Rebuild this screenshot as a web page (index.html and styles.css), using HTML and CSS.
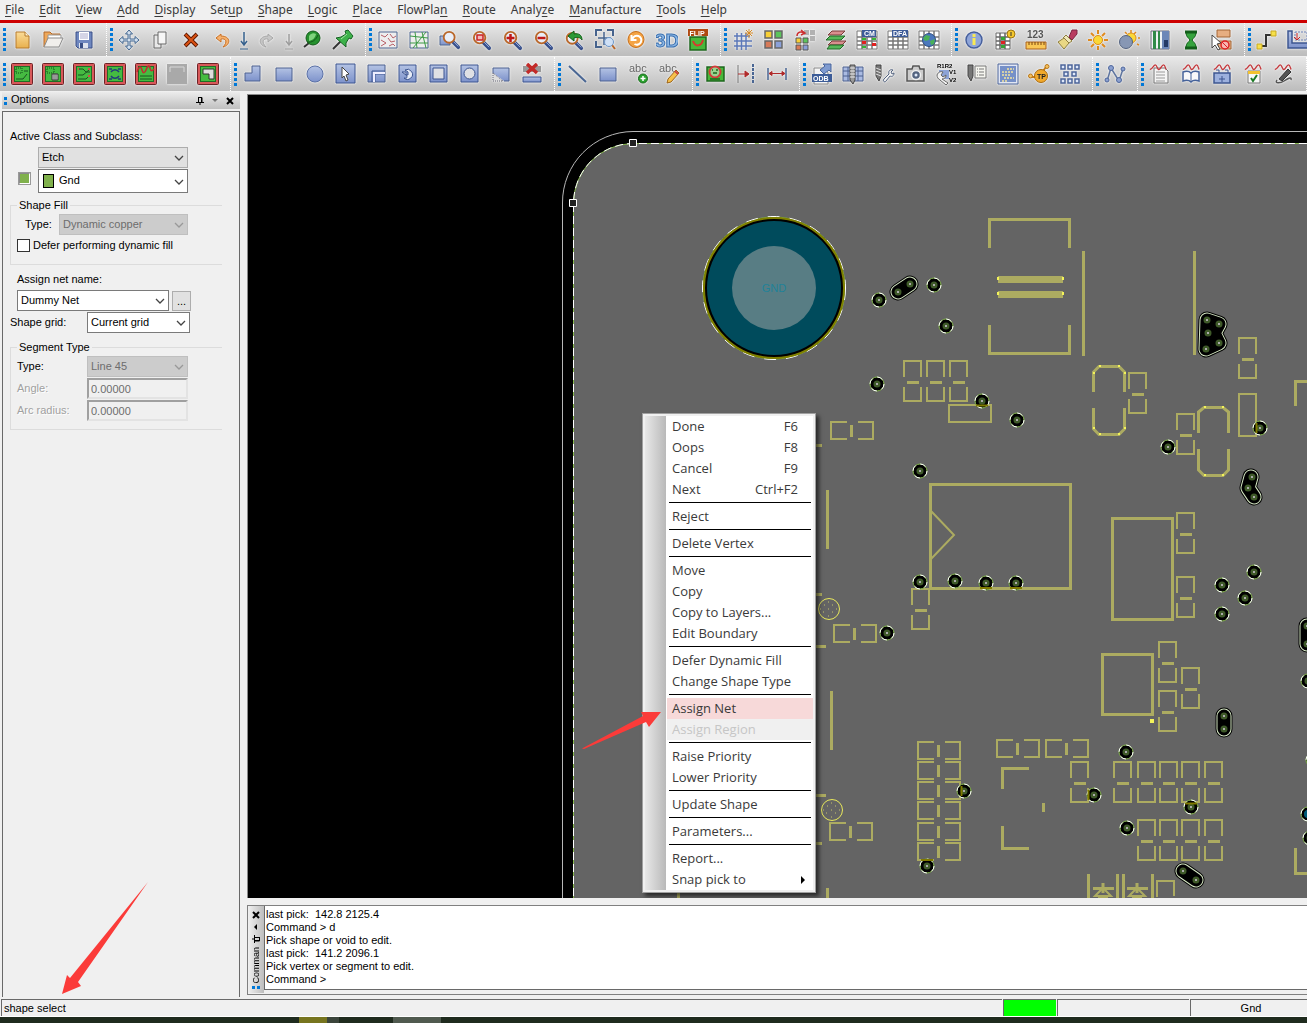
FILE: index.html
```html
<!DOCTYPE html>
<html lang="en">
<head>
<meta charset="utf-8">
<title>PCB Editor</title>
<link rel="stylesheet" href="styles.css">
</head>
<body>
<svg class="defs" aria-hidden="true">
  <defs>
    <linearGradient id="gBlue" x1="0" y1="0" x2="0" y2="1"><stop offset="0" stop-color="#b4c3e4"/><stop offset="1" stop-color="#7d92cb"/></linearGradient>
    <linearGradient id="gOrange" x1="0" y1="0" x2="0" y2="1"><stop offset="0" stop-color="#fbdc98"/><stop offset="1" stop-color="#e8b04e"/></linearGradient>
    <symbol id="pcb" viewBox="0 0 22 22"><rect x="0.500" y="0.500" width="21" height="21" rx="1" fill="#d8595a" stroke="#6d2226"/><rect x="3.500" y="3.500" width="15" height="15" fill="#45bb41" stroke="#1f6d24"/></symbol>
    <symbol id="lens" viewBox="0 0 22 22"><path d="M13 13l6 6" stroke="#38508c" stroke-width="4" stroke-linecap="round"/><path d="M13.500 12.500l5.500 5.500" stroke="#9db2de" stroke-width="1"/><circle cx="9" cy="8" r="6" fill="#e9eef8" stroke="#b9672a" stroke-width="2"/></symbol>
    <symbol id="sheet" viewBox="0 0 22 22"><path d="M1 2h20v18H1z" fill="#fff" stroke="#777"/><path d="M1 8h20M1 12h20M1 16h20M6 2v18M11 2v18M16 2v18" stroke="#777" stroke-width="1.500" fill="none"/></symbol>
    <symbol id="squiggle" viewBox="0 0 22 22"><path d="M2 6c3 0 4-5 6-5s2 5 4 5 3-5 5-5 2 4 3 5" fill="none" stroke="#c4383c" stroke-width="1.500"/></symbol>
    <symbol id="via" viewBox="0 0 16 16"><circle cx="8" cy="8" r="7" fill="#000" stroke="#86b84e"/><circle cx="8" cy="8" r="7" fill="none" stroke="#fff" stroke-dasharray="6 5"/><circle cx="8" cy="8" r="3.500" fill="#3f5a29"/><rect x="7" y="7" width="2" height="2" fill="#aaa"/></symbol>
    <symbol id="hole" viewBox="0 0 16 16"><circle cx="8" cy="8" r="3.500" fill="#3f5a29"/><rect x="7" y="7" width="2" height="2" fill="#aaa"/></symbol>
    <symbol id="capv" viewBox="0 0 19 43"><path d="M1 17V1H18V17M1 27V41H18V27" fill="none" stroke="#acab61" stroke-width="2"/><path d="M4 22.500H16" stroke="#acab61" stroke-width="3"/></symbol>
    <symbol id="caph" viewBox="0 0 44 19"><path d="M17 1H1V18H17M28 1H43V18H28" fill="none" stroke="#acab61" stroke-width="2"/><path d="M21.500 4V16" stroke="#acab61" stroke-width="3"/></symbol>
    <symbol id="drill" viewBox="0 0 24 24"><circle cx="12" cy="12" r="10.500" fill="none" stroke="#e8e85c"/><path d="M7 8h1M15 8h1M11 12h1M6 15h1M15 15h1M11 19h1M11 5h1M19 12h1M3 12h1" stroke="#c5c56a"/></symbol>
    <symbol id="chev" viewBox="0 0 10 6"><path d="M1 1l4 4 4-4" fill="none" stroke="currentColor" stroke-width="1.300"/></symbol>
    <symbol id="pin" viewBox="0 0 8 8"><path d="M2 0.500H6V5M2.500 0.500V5M5.500 0V5M0 5.500H8M4 5.500V8" fill="none" stroke="#000"/></symbol>
  </defs>
</svg>

<nav class="menubar">
  <a href="#"><u>F</u>ile</a><a href="#"><u>E</u>dit</a><a href="#"><u>V</u>iew</a><a href="#"><u>A</u>dd</a><a href="#"><u>D</u>isplay</a><a href="#">Set<u>u</u>p</a><a href="#"><u>S</u>hape</a><a href="#"><u>L</u>ogic</a><a href="#"><u>P</u>lace</a><a href="#">FlowPla<u>n</u></a><a href="#"><u>R</u>oute</a><a href="#">Analy<u>z</u>e</a><a href="#"><u>M</u>anufacture</a><a href="#"><u>T</u>ools</a><a href="#"><u>H</u>elp</a>
</nav>

<div class="toolbar">
  <div class="group">
    <button aria-label="New"><svg viewBox="0 0 22 22"><path d="M5 3h9l4 4v12H5z" fill="url(#gOrange)" stroke="#b67a2c"/><path d="M14 3v4h4" fill="#fff3d2" stroke="#b67a2c"/></svg></button>
    <button aria-label="Open"><svg viewBox="0 0 22 22"><path d="M2 18V3h6l2 2h8v6" fill="#efa85a" stroke="#b0682a"/><path d="M6 6h13v6H6z" fill="#fff" stroke="#999"/><path d="M2 18L6 9h15l-4 9z" fill="#f1efec" stroke="#8b8b8b"/></svg></button>
    <button aria-label="Save"><svg viewBox="0 0 22 22"><path d="M3 3h16v16H5l-2-2z" fill="#6f87bf" stroke="#3a4f86"/><path d="M6 3h10v8H6z" fill="#fff"/><path d="M7 5h8M7 7h8M7 9h8" stroke="#aac"/><path d="M6 14h9v5H6z" fill="#dfe4ee"/><path d="M7 14h3v5H7z" fill="#3a4f86"/></svg></button>
  </div>
  <div class="group">
    <button aria-label="Move"><svg viewBox="0 0 22 22"><path d="M11 1l3.500 4H12v5h5V7.500l4 3.500-4 3.500V12h-5v5h2.500L11 21l-3.500-4H10v-5H5v2.500L1 11l4-3.500V10h5V5H7.500z" fill="#d3e0ee" stroke="#3f638c"/></svg></button>
    <button aria-label="Copy"><svg viewBox="0 0 22 22"><path d="M5 6h7v13H5z" fill="#e8e8e8" stroke="#666"/><path d="M9 3h8v12H9z" fill="#f6f6f6" stroke="#666"/></svg></button>
    <button aria-label="Delete"><svg viewBox="0 0 22 22"><path d="M5 5l12 12M17 5L5 17" stroke="#5e1a05" stroke-width="4"/><path d="M5.500 5.500l11 11M16.500 5.500l-11 11" stroke="#dc5212" stroke-width="2"/></svg></button>
    <button aria-label="Undo"><svg viewBox="0 0 22 22"><path d="M10 5L5 9l5 4v-3c5-1 7 3 2 8 8-2 8-11-2-11z" fill="#f6b16d" stroke="#c66e23"/></svg></button>
    <button class="drop" aria-label="Undo list"><svg viewBox="0 0 14 22"><path d="M7 3v12M4 12l3 4 3-4" fill="none" stroke="#35608c" stroke-width="1.500"/><path d="M3 20h8" stroke="#35608c"/></svg></button>
    <button aria-label="Redo" disabled><svg viewBox="0 0 22 22"><path d="M12 5l5 4-5 4v-3c-5-1-7 3-2 8-8-2-8-11 2-11z" fill="#c6c6c6" stroke="#a5a5a5"/></svg></button>
    <button class="drop" aria-label="Redo list" disabled><svg viewBox="0 0 14 22"><path d="M7 5v10M4 12l3 4 3-4" fill="none" stroke="#9d9d9d" stroke-width="1.500"/><path d="M3 20h8" stroke="#9d9d9d"/></svg></button>
    <button aria-label="Unfix"><svg viewBox="0 0 22 22"><path d="M3 18l5-4" stroke="#333" stroke-width="2"/><circle cx="12" cy="9" r="7" fill="#25912d" stroke="#14571a"/><path d="M8 7a5 5 0 0 1 7-2c-1 4-3 6-7 7z" fill="#7fd37d"/><path d="M6 13c5 1 9-2 11-7" stroke="#14571a" fill="none"/></svg></button>
    <button aria-label="Fix"><svg viewBox="0 0 22 22"><path d="M1 20l8-8" stroke="#333" stroke-width="2"/><path d="M4 9l5-1 5-3-1-3 3-1 5 6-2 3-2-1-3 5v4z" fill="#3db24a" stroke="#165f22"/><path d="M9 10l6-5" stroke="#a5e6a5"/></svg></button>
  </div>
  <div class="group">
    <button aria-label="Unrats all"><svg viewBox="0 0 22 22"><path d="M2 3h18v16H2z" fill="#eee" stroke="#4c648f"/><path d="M4 6l4 2 3-3M13 5l3 4 3-2M4 11l5 3-5 3M11 9l3 4 4-1M12 17l4-2 2 2" fill="none" stroke="#b86068"/></svg></button>
    <button aria-label="Rats all"><svg viewBox="0 0 22 22"><path d="M2 3h18v16H2z" fill="#eee" stroke="#4c648f"/><path d="M2 7l18 2M2 14h18M7 3l2 16M18 3L5 19M14 3l4 16" fill="none" stroke="#3c9a45"/></svg></button>
    <button aria-label="Zoom points"><svg viewBox="0 0 22 22"><path d="M1 7h10v9H1z" fill="url(#gBlue)" stroke="#4c648f"/><use href="#lens" x="2" y="1" width="20" height="20"/></svg></button>
    <button aria-label="Zoom fit"><svg viewBox="0 0 22 22"><use href="#lens" x="1" y="1" width="21" height="21"/><path d="M7 6h6v5H7z" fill="#f3b8b8" stroke="#c22" stroke-width="1.500"/></svg></button>
    <button aria-label="Zoom in"><svg viewBox="0 0 22 22"><use href="#lens" x="1" y="1" width="21" height="21"/><path d="M9.500 5v8M5.500 9h8" stroke="#c01818" stroke-width="2.500"/></svg></button>
    <button aria-label="Zoom out"><svg viewBox="0 0 22 22"><use href="#lens" x="1" y="1" width="21" height="21"/><path d="M5.500 9h8" stroke="#c01818" stroke-width="2.500"/></svg></button>
    <button aria-label="Zoom previous"><svg viewBox="0 0 22 22"><use href="#lens" x="1" y="2" width="20" height="20"/><path d="M5 7l6-5v3c5-1 8 1 8 6-2-3-5-3-8-2v3z" fill="#2e9a36" stroke="#15601c"/></svg></button>
    <button aria-label="Zoom center"><svg viewBox="0 0 22 22"><path d="M2 7V1h6M13 1h6v6M2 12v6h6" fill="none" stroke="#46638d" stroke-width="2"/><path d="M10 3v13M4 9h13" stroke="#46638d" stroke-width="1.500"/><path d="M18 16l3 4" stroke="#b9672a" stroke-width="2"/><circle cx="15" cy="13" r="4.500" fill="#cfe0f5" stroke="#6b95c8"/></svg></button>
    <button aria-label="Refresh"><svg viewBox="0 0 22 22"><circle cx="11" cy="10.500" r="8" fill="#f4a344" stroke="#c46d1a"/><path d="M6.500 6v5h5M7.500 10a4.500 4.500 0 1 1 2 5" fill="none" stroke="#fff" stroke-width="2"/></svg></button>
    <button aria-label="3D view"><svg viewBox="0 0 22 22"><text x="-1" y="18" class="t3d">3D</text></svg></button>
    <button aria-label="Flip design"><svg viewBox="0 0 22 22"><path d="M3 8h16v13H3z" fill="#48b83a" stroke="#1c661c" stroke-width="1.500"/><path d="M6 12c2 6 8 6 10-1" fill="none" stroke="#d8372e" stroke-width="2"/><rect x="1" y="0" width="20" height="7" fill="#b04a12"/><text x="2.500" y="6.500" class="tiny white">FLIP</text></svg></button>
  </div>
  <div class="group">
    <button aria-label="Grid toggle"><svg viewBox="0 0 22 22"><path d="M5 4v17M9.500 4v17M14 4v17M2 7h16M2 12h18M2 17h18" stroke="#5c78b8" stroke-width="1.500"/><path d="M17 0v9M13 4h8M14 1l6 6M20 1l-6 6" stroke="#d48a28"/></svg></button>
    <button aria-label="Color dialog"><svg viewBox="0 0 22 22"><g stroke="#666" stroke-width="1.500"><path d="M2 2h7v7H2z" fill="#f8cf35"/><path d="M12 2h7v7h-7z" fill="#5cc45c"/><path d="M2 12h7v7H2z" fill="#d77a58"/><path d="M12 12h7v7h-7z" fill="#8aa0d8"/></g></svg></button>
    <button aria-label="Swap layers"><svg viewBox="0 0 22 22"><path d="M10 1h5v5h-5zM16 1h5v5h-5zM16 7h5v5h-5z" fill="#b1b1b1"/><g stroke="#555"><path d="M2 9h5v5H2z" fill="#f8cf35"/><path d="M9 9h5v5H9z" fill="#5cc45c"/><path d="M2 16h5v5H2z" fill="#d77a58"/><path d="M9 16h5v5H9z" fill="#8aa0d8"/></g><path d="M3 7c0-4 4-5 7-3M7 1l4 3-4 2" fill="none" stroke="#cb3030" stroke-width="1.500"/></svg></button>
    <button aria-label="Cross-section"><svg viewBox="0 0 22 22"><path d="M7 2h13l-4 4H3z" fill="#d98f8f" stroke="#7a3b3b"/><path d="M5 7h15l-4 4H1z" fill="#57b85a" stroke="#1f6825"/><path d="M7 12h14l-4 4H3z" fill="#d98f8f" stroke="#7a3b3b"/><path d="M5 16h14l-4 4H2z" fill="#57b85a" stroke="#1f6825"/></svg></button>
    <button aria-label="Constraint manager"><svg viewBox="0 0 22 22"><use href="#sheet" width="22" height="22"/><rect x="6" y="1" width="14" height="7" fill="#3d5b98"/><path d="M6 9h4v2H6zM16 9h4v2h-4zM6 17h4v2H6z" fill="#36b436"/><path d="M6 12h4v3H6zM16 14h4v3h-4z" fill="#e02020"/><text x="8" y="7" class="tiny white">CM</text></svg></button>
    <button aria-label="DFA sheet"><svg viewBox="0 0 22 22"><use href="#sheet" width="22" height="22"/><rect x="5" y="1" width="16" height="7" fill="#3d5b98"/><text x="6" y="7" class="tiny white">DFA</text></svg></button>
    <button aria-label="Global sheet"><svg viewBox="0 0 22 22"><use href="#sheet" width="22" height="22"/><circle cx="11" cy="11" r="6.500" fill="#4b78bd" stroke="#2e4f85"/><path d="M8 6l4 1-1 4-4 1-2-3zM12 12l5-2-1 5-3 1z" fill="#4ab158"/></svg></button>
  </div>
  <div class="group">
    <button aria-label="Show element"><svg viewBox="0 0 22 22"><circle cx="11" cy="11" r="8" fill="#8fa5d8" stroke="#465f9c" stroke-width="1.500"/><path d="M11 5v3M11 9v7" stroke="#f9ea52" stroke-width="3"/></svg></button>
    <button aria-label="Show status"><svg viewBox="0 0 22 22"><path d="M2 4h14v16H2z" fill="#fff" stroke="#666"/><path d="M2 8h14M2 12h14M2 16h14M6 4v16M11 4v16" stroke="#666" stroke-width="1.500"/><path d="M7 8h4v3H7zM7 16h4v3H7z" fill="#36a436"/><path d="M7 12h4v3H7z" fill="#d22"/><circle cx="17" cy="5" r="4" fill="#f5c72c" stroke="#9c7411"/><path d="M17 3v4" stroke="#333"/></svg></button>
    <button aria-label="Measure"><svg viewBox="0 0 22 22"><text x="2" y="9" class="small">123</text><path d="M1 13h20v7H1z" fill="#f9c755" stroke="#a9601d"/><path d="M4 13v3M7 13v3M10 13v3M13 13v3M16 13v3M19 13v3" stroke="#7a4410"/></svg></button>
    <button aria-label="Highlight"><svg viewBox="0 0 22 22"><path d="M13 8l3-7h5v4l-5 6z" fill="#b83b60" stroke="#7b2240"/><path d="M10 6l6 6-3 2-6-5z" fill="#efe7bb" stroke="#8d7d3d"/><path d="M2 13l6-4 5 5-5 6z" fill="#e9d784" stroke="#8d7d3d"/></svg></button>
    <button aria-label="Dehighlight all"><svg viewBox="0 0 22 22"><path d="M11 1v4M11 17v4M1 11h4M17 11h4M4 4l3 3M15 15l3 3M18 4l-3 3M4 18l3-3" stroke="#e08a1e" stroke-width="2"/><circle cx="11" cy="11" r="4.500" fill="#fbd837" stroke="#d98b1a"/></svg></button>
    <button aria-label="Shadow mode"><svg viewBox="0 0 22 22"><path d="M13 1v3M20 9h2M18 3l-2 2M7 3l2 2M19 15l2 1" stroke="#e08a1e" stroke-width="1.500"/><circle cx="13" cy="9" r="5" fill="#fbd837" stroke="#d98b1a"/><circle cx="8" cy="13" r="6.500" fill="#8797b4" stroke="#53637f"/></svg></button>
    <button aria-label="Waive design rules"><svg viewBox="0 0 22 22"><path d="M2 2h18v18H2z" fill="#eef2f4" stroke="#667"/><path d="M4 2h3v18H4zM9 2h2v18H9z" fill="#2f8a49"/><path d="M13 2h7v18h-7z" fill="#6d87b8"/><path d="M15 11h4v7h-4z" fill="#253a66"/></svg></button>
    <button aria-label="Timing"><svg viewBox="0 0 22 22"><path d="M5 3h12M5 19h12" stroke="#135e1b" stroke-width="3"/><path d="M6 4h10c0 4-3 5-4 7 1 2 4 3 4 7H6c0-4 3-5 4-7-1-2-4-3-4-7z" fill="#36a33e" stroke="#135e1b"/></svg></button>
    <button aria-label="Application mode"><svg viewBox="0 0 22 22"><path d="M6 1h13v7H6zM7 12h13v8H7z" fill="#e6ae82" stroke="#a26535"/><path d="M1 6l9 8-4 1 3 5-2 1-3-5-3 3z" fill="#fff" stroke="#444"/><circle cx="14" cy="16" r="4" fill="#f7b6b0" stroke="#d22" stroke-width="1.500"/><path d="M11 13l6 6" stroke="#d22"/></svg></button>
  </div>
  <div class="group">
    <button aria-label="Add connect"><svg viewBox="0 0 22 22"><path d="M5 17h5V6h8" fill="none" stroke="#333" stroke-width="2"/><path d="M1 15h5v5H1zM15 2h5v5h-5z" fill="#f6e04b" stroke="#c8a820"/></svg></button>
    <button aria-label="Slide"><svg viewBox="0 0 22 22"><path d="M1 2h4v12h16v5H1z" fill="url(#gBlue)" stroke="#3c5590" stroke-width="1.500"/><path d="M8 3h12v8H8z" fill="none" stroke="#6b81b8" stroke-dasharray="2 1"/><path d="M10 4v7M7 8l3 3 3-3" fill="none" stroke="#c22"/></svg></button>
  </div>
</div>

<div class="toolbar second">
  <div class="group">
    <button aria-label="Etch edit"><svg viewBox="0 0 22 22"><use href="#pcb" width="22" height="22"/><path d="M5 5h6v5H5z" fill="none" stroke="#134d18" stroke-dasharray="1 1"/><path d="M5 16h7l4-5M13 8h4" fill="none" stroke="#1a5220"/></svg></button>
    <button aria-label="General edit"><svg viewBox="0 0 22 22"><use href="#pcb" width="22" height="22"/><path d="M5 5h7v5H5z" fill="none" stroke="#134d18" stroke-dasharray="1 1"/><path d="M10 11h6v6h-6z" fill="#ddd" stroke="#333"/><path d="M12 10v7M14 10v7" stroke="#555"/></svg></button>
    <button aria-label="Flow planning"><svg viewBox="0 0 22 22"><use href="#pcb" width="22" height="22"/><path d="M5 6h5l3 3h4M5 12h5l6-5M5 16h8l3-3" fill="none" stroke="#1a5220"/><path d="M5 6h1M15 6h2M15 13h2" stroke="#d8494a" stroke-width="2"/></svg></button>
    <button aria-label="Placement edit"><svg viewBox="0 0 22 22"><use href="#pcb" width="22" height="22"/><path d="M7 9c2-3 6-3 8 0M7 13c2 3 6 3 8 0M5 6h3M14 6h3M5 16h3M14 16h3" fill="none" stroke="#233a7c" stroke-width="1.500"/></svg></button>
    <button aria-label="Signal integrity"><svg viewBox="0 0 22 22"><use href="#pcb" width="22" height="22"/><path d="M2 9c2-6 4-6 5-2s3 3 4 0 3-6 4-2 2 3 4 1" fill="none" stroke="#c42b2f" stroke-width="1.500"/><path d="M5 13h12M5 16h12" stroke="#1a5220"/></svg></button>
    <button aria-label="RF edit" disabled><svg viewBox="0 0 22 22"><path d="M1 1h20v20H1z" fill="#a9a9a9"/><path d="M4 9V4h14v5" fill="none" stroke="#d7d7d7"/></svg></button>
    <button aria-label="Shape edit"><svg viewBox="0 0 22 22"><use href="#pcb" width="22" height="22"/><path d="M6 6h11v10h-5v-5H6z" fill="#dedede" stroke="#333"/></svg></button>
  </div>
  <div class="group">
    <button aria-label="Shape polygon"><svg viewBox="0 0 22 22"><path d="M3 18v-8h7V3h8v15z" fill="url(#gBlue)" stroke="#4c608f"/></svg></button>
    <button aria-label="Shape rectangle"><svg viewBox="0 0 22 22"><path d="M3 5h16v13H3z" fill="url(#gBlue)" stroke="#4c608f"/></svg></button>
    <button aria-label="Shape circle"><svg viewBox="0 0 22 22"><circle cx="11" cy="11" r="8" fill="url(#gBlue)" stroke="#5a70a5"/></svg></button>
    <button aria-label="Shape select"><svg viewBox="0 0 22 22"><path d="M1 1h19v19H1z" fill="url(#gBlue)" stroke="#3c5590"/><path d="M7 4l7 7-3 1 2 5-2 1-2-5-2 2z" fill="#fff" stroke="#444"/></svg></button>
    <button aria-label="Shape void polygon"><svg viewBox="0 0 22 22"><path d="M2 2h17v17H2z" fill="url(#gBlue)" stroke="#4c608f"/><path d="M6 19V8h13M9 19v-8h10" fill="none" stroke="#3c5590"/><path d="M7 19V9h12v2H9v8z" fill="#eef"/></svg></button>
    <button aria-label="Shape void arc"><svg viewBox="0 0 22 22"><path d="M2 2h17v17H2z" fill="url(#gBlue)" stroke="#3c5590"/><path d="M5 9h4v3l2 0V9L8 7a5 5 0 1 1-1 8c3 1 4-1 2-3z" fill="#e6ebf6" stroke="#3c5590"/></svg></button>
    <button aria-label="Shape void rectangle"><svg viewBox="0 0 22 22"><path d="M2 2h17v17H2z" fill="url(#gBlue)" stroke="#3c5590"/><path d="M5 5h11v11H5z" fill="#dfe0e4" stroke="#3c5590"/></svg></button>
    <button aria-label="Shape void circle"><svg viewBox="0 0 22 22"><path d="M2 2h17v17H2z" fill="url(#gBlue)" stroke="#3c5590"/><circle cx="10.500" cy="10.500" r="5.500" fill="#dfe0e4" stroke="#3c5590"/></svg></button>
    <button aria-label="Shape void element"><svg viewBox="0 0 22 22"><path d="M3 5h16v13h-5L3 10z" fill="url(#gBlue)"/><path d="M3 10V5h16v13h-5" fill="none" stroke="#4c608f"/><path d="M3 10v8h10z" fill="#ddd" stroke="#667" stroke-dasharray="1 1"/></svg></button>
    <button aria-label="Delete islands"><svg viewBox="0 0 22 22"><path d="M2 3h18v6H2z" fill="#999"/><path d="M6 1l10 9M16 1L6 10" stroke="#c22a28" stroke-width="3.500"/><path d="M2 14h18v5H2z" fill="url(#gBlue)" stroke="#3c5590"/></svg></button>
  </div>
  <div class="group">
    <button aria-label="Add line"><svg viewBox="0 0 22 22"><path d="M3 3l17 16" stroke="#4a6693" stroke-width="2"/></svg></button>
    <button aria-label="Add rectangle"><svg viewBox="0 0 22 22"><path d="M3 5h16v13H3z" fill="url(#gBlue)" stroke="#4c608f"/></svg></button>
    <button aria-label="Add text"><svg viewBox="0 0 22 22"><text x="1" y="9" class="abc">abc</text><circle cx="15" cy="15.500" r="4.500" fill="#2ba22f" stroke="#17691b"/><path d="M15 13v5M12.500 15.500h5" stroke="#fff" stroke-width="1.500"/></svg></button>
    <button aria-label="Edit text"><svg viewBox="0 0 22 22"><text x="0" y="9" class="abc">abc</text><path d="M9 16l8-9 3 3-8 9-4 1z" fill="#f7c14a" stroke="#9b641a"/><path d="M16 8l3 3" stroke="#c44" stroke-width="2"/></svg></button>
  </div>
  <div class="group">
    <button aria-label="Place manual"><svg viewBox="0 0 22 22"><path d="M3 4h17v14H3z" fill="#48b83a" stroke="#1c661c" stroke-width="1.500"/><circle cx="11" cy="9" r="5.500" fill="#9bd190" stroke="#d13a3a" stroke-width="2"/><path d="M8 7h1M12 7h2M9 10h4M6 16h10" stroke="#1c661c" stroke-width="1.500"/></svg></button>
    <button aria-label="Dimension edge"><svg viewBox="0 0 22 22"><path d="M3 2v18" stroke="#777"/><path d="M3 11h10M10 8l4 3-4 3z" stroke="#b02a2a" fill="#b02a2a"/><path d="M18 1v20" stroke="#4a6693" stroke-width="2" stroke-dasharray="3 1"/></svg></button>
    <button aria-label="Dimension width"><svg viewBox="0 0 22 22"><path d="M2 5v12M20 5v12" stroke="#4a6693" stroke-width="1.500"/><path d="M4 10.500h14M6 8.500l-3 2 3 2zM16 8.500l3 2-3 2z" stroke="#b02a2a" fill="#b02a2a"/></svg></button>
  </div>
  <div class="group">
    <button aria-label="ODB output"><svg viewBox="0 0 22 22"><path d="M3 5h11l3 5v11H3z" fill="#f5f5f5" stroke="#888"/><path d="M9 7l5-4-2-2h8v8l-2-2-5 4z" fill="#7f9bd0" stroke="#46639a"/><rect x="1" y="11" width="20" height="8" fill="#3c5c98"/><text x="2" y="18" class="tiny white">ODB</text></svg></button>
    <button aria-label="Drill legend"><svg viewBox="0 0 22 22"><path d="M1 4h20v14H1z" fill="#aabbe2" stroke="#4c608f"/><path d="M1 8h20M1 13h20M6 4v14M16 4v14" stroke="#4c608f"/><path d="M8 2h5v15l-2 4-3-4z" fill="#999" stroke="#444"/><path d="M8 5h5M8 8h5M8 11h5M8 14h5" stroke="#eee"/></svg></button>
    <button aria-label="Drill customize"><svg viewBox="0 0 22 22"><path d="M3 2h5v11l-2 5-3-5z" fill="#777" stroke="#444"/><path d="M3 5l5 2M3 8l5 2M3 11l5 2" stroke="#ddd"/><path d="M11 16l5-5c-1-3 1-5 4-4l-2 2 1 2 2-1c0 3-2 4-4 3l-4 5c-1 2-4 0-2-2z" fill="#f2f2f2" stroke="#53637f"/></svg></button>
    <button aria-label="Artwork"><svg viewBox="0 0 22 22"><path d="M3 6h5l1-3h6l1 3h4v12H3z" fill="#ccc" stroke="#555" stroke-width="1.500"/><circle cx="12" cy="12" r="4.500" fill="#53637f" stroke="#eee" stroke-width="1.500"/><circle cx="12" cy="12" r="1.500" fill="#dfe8f8"/></svg></button>
    <button aria-label="Auto rename"><svg viewBox="0 0 22 22"><path d="M4 7h10v9H4z" fill="#8ca3d6"/><path d="M2 12c1-3 4-4 6-3l-2 3 2 2 3-2c0 3-2 4-4 4l6 4-2 2-6-5c-2-1-3-3-3-5z" fill="#f2f2f2" stroke="#666"/><text x="2" y="5" class="mini">R1R2</text><text x="14" y="11" class="mini">V1</text><text x="14" y="19" class="mini">V2</text></svg></button>
    <button aria-label="NC parameters"><svg viewBox="0 0 22 22"><path d="M2 2h5v11l-2 5-3-5z" fill="#777" stroke="#444"/><path d="M9 3h11v12H9z" fill="#f6f6f0" stroke="#777"/><path d="M11 6h1M13 6h5M11 9h1M13 9h5M11 12h1M13 12h5" stroke="#777"/></svg></button>
    <button aria-label="Thieving"><svg viewBox="0 0 22 22"><path d="M1 1h20v20H1z" fill="#e2e7f4" stroke="#4c6499"/><path d="M3 3h16v16H3z" fill="#7690c8"/><path d="M5 9h12M5 12h8M7 15h10M5 18h6M10 6h7" stroke="#f3e3a0" stroke-width="1.500" stroke-dasharray="2 1"/></svg></button>
    <button aria-label="Test prep"><svg viewBox="0 0 22 22"><path d="M1 14h6M15 8l3-4" stroke="#c47c18" stroke-width="2"/><circle cx="19" cy="3.500" r="2" fill="#f4c05a" stroke="#b5741a"/><circle cx="2.500" cy="13" r="2" fill="#f4c05a" stroke="#b5741a"/><circle cx="13" cy="13" r="6.500" fill="#f1a92b" stroke="#a8690f"/><text x="9" y="16" class="tiny">TP</text></svg></button>
    <button aria-label="Panelize"><svg viewBox="0 0 22 22"><g fill="#dfe8fa" stroke="#4c6499" stroke-width="1.500"><path d="M2 2h4v4H2zM9 2h4v4H9zM16 2h4v4h-4zM5 9h4v4H5zM13 9h4v4h-4zM2 16h4v4H2zM9 16h4v4H9zM16 16h4v4h-4z"/></g></svg></button>
  </div>
  <div class="group">
    <button aria-label="Net topology"><svg viewBox="0 0 22 22"><path d="M3 18L7 5l8 13 4-12" fill="none" stroke="#5f759f" stroke-width="1.500"/><g fill="#8ba0d0" stroke="#4c6499"><circle cx="3" cy="17" r="2"/><circle cx="7" cy="5" r="2.500"/><circle cx="15" cy="17" r="2.500"/><circle cx="19" cy="6" r="2"/></g></svg></button>
  </div>
  <div class="group">
    <button aria-label="Signal report"><svg viewBox="0 0 22 22"><path d="M5 5h11l3 3v12H5z" fill="#f5f5f5" stroke="#777"/><path d="M7 9h9M7 12h9M7 15h9M7 18h9" stroke="#999"/><use href="#squiggle" x="-1" y="1" width="20" height="20"/></svg></button>
    <button aria-label="Signal library"><svg viewBox="0 0 22 22"><path d="M3 9c3-1 6-1 8 1 2-2 5-2 8-1v9c-3-1-6-1-8 1-2-2-5-2-8-1z" fill="#f8f8fa" stroke="#45629a" stroke-width="1.500"/><path d="M11 10v9" stroke="#45629a"/><use href="#squiggle" x="1" y="1" width="20" height="20"/></svg></button>
    <button aria-label="Signal model"><svg viewBox="0 0 22 22"><path d="M3 10h16v10H3z" fill="#9cb0dd" stroke="#3c5590" stroke-width="1.500"/><path d="M5 7h3v3M14 7h3v3M8 16h6M11 13v6" stroke="#3c5590" fill="none"/><use href="#squiggle" x="1" y="1" width="20" height="20"/></svg></button>
    <button aria-label="Signal audit"><svg viewBox="0 0 22 22"><path d="M6 8h12v12H6z" fill="#f8f8f8" stroke="#777"/><path d="M6 8h12v3H6z" fill="#f3c22e"/><path d="M9 15l2 3 4-6" fill="none" stroke="#1b7a24" stroke-width="2"/><use href="#squiggle" x="1" y="1" width="20" height="20"/></svg></button>
    <button aria-label="Signal probe"><svg viewBox="0 0 22 22"><path d="M6 16l9-10 3 3-9 9z" fill="#555" stroke="#333"/><path d="M4 17c-3 4 4 3 7 1s8-5 7-1" fill="none" stroke="#555" stroke-width="1.500"/><use href="#squiggle" x="0" y="1" width="20" height="20"/></svg></button>
  </div>
</div>

<main>
  <aside class="options">
    <header class="caption">
      <i class="dots"></i><span>Options</span>
      <button aria-label="Auto hide"><svg viewBox="0 0 8 8"><use href="#pin" width="8" height="8"/></svg></button>
      <button aria-label="Menu"><svg viewBox="0 0 8 8"><path d="M1 2h6L4 5z" fill="#777"/></svg></button>
      <button aria-label="Close"><svg viewBox="0 0 8 8"><path d="M1 1l6 6M7 1L1 7" stroke="#000" stroke-width="2"/></svg></button>
    </header>
    <form class="form">
      <label class="title" for="cls">Active Class and Subclass:</label>
      <div class="classes">
        <span></span>
        <span class="combo flat"><select id="cls"><option>Etch</option></select><svg><use href="#chev"/></svg></span>
        <button type="button" class="swatchbtn" aria-label="Layer visibility"></button>
        <span class="combo tall"><i class="swatch"></i><select aria-label="Subclass"><option>Gnd</option></select><svg><use href="#chev"/></svg></span>
      </div>
      <fieldset>
        <legend>Shape Fill</legend>
        <div class="fillrow"><label for="fill">Type:</label><span class="combo off"><select id="fill" disabled><option>Dynamic copper</option></select><svg><use href="#chev"/></svg></span></div>
        <label class="check"><input type="checkbox">Defer performing dynamic fill</label>
      </fieldset>
      <label class="net" for="net">Assign net name:</label>
      <div class="netrow"><span class="combo"><select id="net"><option>Dummy Net</option></select><svg><use href="#chev"/></svg></span><button type="button" class="more">...</button></div>
      <div class="gridrow"><label for="grid">Shape grid:</label><span class="combo"><select id="grid"><option>Current grid</option></select><svg><use href="#chev"/></svg></span></div>
      <fieldset class="segment">
        <legend>Segment Type</legend>
        <div class="segrow"><label for="seg">Type:</label><span class="combo off"><select id="seg" disabled><option>Line 45</option></select><svg><use href="#chev"/></svg></span></div>
        <div class="segrow dim"><label for="ang">Angle:</label><input id="ang" type="text" value="0.00000" disabled></div>
        <div class="segrow dim"><label for="rad">Arc radius:</label><input id="rad" type="text" value="0.00000" disabled></div>
      </fieldset>
    </form>
    <svg class="arrow status-arrow" viewBox="0 0 88 114"><path d="M87 1L17 101l3 4L1 113 6 94l3 3z" fill="#fb3b39"/></svg>
  </aside>

  <section class="work">
    <div class="board">
      <svg class="scene">
        <g transform="translate(-248 -95)">
          <path d="M562.500 1400V203A71 71 0 0 1 633 131.500H2600" fill="none" stroke="#b8b8b8"/>
          <path d="M573.500 1400V203A60 60 0 0 1 633 143.500H2600V1400z" fill="#646464" stroke="#86b84e"/>
          <path d="M573.500 1400V203A60 60 0 0 1 633 143.500H2600" fill="none" stroke="#fff" stroke-dasharray="8 4"/>
          <path d="M569.500 199.500h7v7h-7zM629.500 139.500h7v7h-7z" fill="#222" stroke="#fff"/>
          <circle cx="774" cy="288" r="71" fill="#000" stroke="#86b84e"/>
          <circle cx="774" cy="288" r="71.500" fill="none" stroke="#fff" stroke-dasharray="12 10"/>
          <circle cx="774" cy="288" r="70" fill="none" stroke="#7f7f00" stroke-width="2"/>
          <circle cx="774" cy="288" r="67" fill="#004b5c"/>
          <circle cx="774" cy="288" r="42" fill="#587d84"/>
          <text x="774" y="292" text-anchor="middle" class="gnd">GND</text>

          <g fill="none" stroke="#acab61" stroke-width="3">
            <path d="M989.500 248V219.500H1069.500V248M989.500 325V353.500H1069.500V325M1083.500 251V356M1194.500 251V355"/>
            <path d="M998 279.500H1063M998 294.500H1063" stroke-width="7"/>
            <path d="M1093.500 392V372L1099 366.500H1119L1124.500 372V392M1093.500 408V429L1099 434.500H1119L1124.500 429V408"/>
            <path d="M1198.500 433V412L1204 407.500H1223L1228.500 412V433M1198.500 449V470L1204 475.500H1223L1228.500 470V449"/>
            <path d="M930.500 484.500H1070.500V588.500H930.500zM1112.500 518.500H1172.500V619.500H1112.500zM1102.500 654.500H1152.500V714.500H1102.500z"/>
            <path d="M931 511L954 535L931 559" stroke-width="2"/>
            <path d="M949 405H991V422H949zM1239 394H1256V436H1239z" stroke-width="2"/>
            <path d="M1295.500 406V381.500H1320M1295.500 848V873.500H1320"/>
            <path d="M827.500 490V549M831.500 691V750M816 445.500H822M816 594.500H822M816 646.500H826M816 795.500H826M816 843.500H822M827.500 888V898M678.500 888V898"/>
            <path d="M1029 768.500H1002.500V789M1002.500 826V848.500H1029M1043.500 803V812"/>
            <path d="M1088.500 874V898M1117.500 874V898M1123.500 874V898M1152.500 874V898M1103 883V893M1137 883V893M1093 888.500H1114M1127 888.500H1148M1098 897.500H1108M1132 897.500H1142"/>
            <path d="M1095 896L1103 888L1111 896zM1129 896L1137 888L1145 896zM1157 897V881H1174V896" stroke-width="2"/>
          </g>
          <path d="M997 277h2v3h-2zM1062 277h2v3h-2zM997 292h2v3h-2zM1062 292h2v3h-2zM1150 719h4v4h-4zM1099 365h2v2h-2zM1118 365h2v2h-2zM1093 372h2v2h-2zM1124 372h2v2h-2zM1093 427h2v2h-2zM1124 427h2v2h-2zM1099 433h2v2h-2zM1118 433h2v2h-2zM1204 406h2v2h-2zM1222 406h2v2h-2zM1204 474h2v2h-2zM1222 474h2v2h-2z" fill="#f3f35a"/>
          <g>
            <use href="#capv" x="903" y="360" width="19" height="43"/><use href="#capv" x="926" y="360" width="19" height="43"/><use href="#capv" x="949" y="360" width="19" height="43"/>
            <use href="#capv" x="1128" y="372" width="19" height="43"/><use href="#capv" x="1238" y="337" width="19" height="43"/><use href="#capv" x="1176" y="413" width="19" height="43"/>
            <use href="#capv" x="911" y="588" width="19" height="43"/><use href="#capv" x="1176" y="512" width="19" height="43"/><use href="#capv" x="1176" y="576" width="19" height="43"/>
            <use href="#capv" x="1158" y="641" width="19" height="43"/><use href="#capv" x="1181" y="667" width="19" height="43"/><use href="#capv" x="1158" y="690" width="19" height="43"/>
            <use href="#capv" x="1070" y="761" width="19" height="43"/><use href="#capv" x="1113" y="761" width="19" height="43"/><use href="#capv" x="1137" y="761" width="19" height="43"/><use href="#capv" x="1159" y="761" width="19" height="43"/><use href="#capv" x="1181" y="761" width="19" height="43"/><use href="#capv" x="1204" y="761" width="19" height="43"/>
            <use href="#capv" x="1137" y="819" width="19" height="43"/><use href="#capv" x="1159" y="819" width="19" height="43"/><use href="#capv" x="1181" y="819" width="19" height="43"/><use href="#capv" x="1204" y="819" width="19" height="43"/>
            <use href="#caph" x="830" y="421" width="44" height="19"/><use href="#caph" x="833" y="624" width="44" height="19"/><use href="#caph" x="829" y="822" width="44" height="19"/>
            <use href="#caph" x="917" y="741" width="44" height="19"/><use href="#caph" x="917" y="761" width="44" height="19"/><use href="#caph" x="917" y="781" width="44" height="19"/><use href="#caph" x="917" y="801" width="44" height="19"/><use href="#caph" x="917" y="822" width="44" height="19"/><use href="#caph" x="917" y="842" width="44" height="19"/>
            <use href="#caph" x="996" y="739" width="44" height="19"/><use href="#caph" x="1045" y="739" width="44" height="19"/>
            <use href="#drill" x="817" y="597" width="24" height="24"/><use href="#drill" x="820" y="798" width="24" height="24"/>
          </g>
          <g fill="none" stroke-linecap="round" stroke-linejoin="round">
            <path d="M898 292L910 284M1207 320L1219 324L1214 333L1219 343L1206 349zM1251 477L1248 488L1254 497M1307 626V644M1224 716V729M1183 871L1196 880" stroke="#000" stroke-width="17"/>
            <path d="M898 292L910 284M1207 320L1219 324L1214 333L1219 343L1206 349zM1251 477L1248 488L1254 497M1307 626V644M1224 716V729M1183 871L1196 880" stroke="#d6e8c4" stroke-width="15"/>
            <path d="M898 292L910 284M1207 320L1219 324L1214 333L1219 343L1206 349zM1251 477L1248 488L1254 497M1307 626V644M1224 716V729M1183 871L1196 880" stroke="#000" stroke-width="13"/>
          </g>
          <g>
            <use href="#hole" x="890" y="284" width="16" height="16"/><use href="#hole" x="902" y="276" width="16" height="16"/>
            <use href="#hole" x="1199" y="312" width="16" height="16"/><use href="#hole" x="1211" y="316" width="16" height="16"/><use href="#hole" x="1200" y="325" width="16" height="16"/><use href="#hole" x="1211" y="335" width="16" height="16"/><use href="#hole" x="1198" y="341" width="16" height="16"/>
            <use href="#hole" x="1244" y="469" width="16" height="16"/><use href="#hole" x="1240" y="480" width="16" height="16"/><use href="#hole" x="1246" y="489" width="16" height="16"/>
            <use href="#hole" x="1299" y="618" width="16" height="16"/><use href="#hole" x="1299" y="636" width="16" height="16"/>
            <use href="#hole" x="1216" y="708" width="16" height="16"/><use href="#hole" x="1216" y="721" width="16" height="16"/>
            <use href="#hole" x="1175" y="863" width="16" height="16"/><use href="#hole" x="1188" y="872" width="16" height="16"/>
            <use href="#via" x="871" y="292" width="16" height="16"/><use href="#via" x="926" y="277" width="16" height="16"/><use href="#via" x="938" y="318" width="16" height="16"/><use href="#via" x="869" y="376" width="16" height="16"/>
            <use href="#via" x="974" y="393" width="16" height="16"/><use href="#via" x="1009" y="412" width="16" height="16"/><use href="#via" x="912" y="463" width="16" height="16"/><use href="#via" x="1160" y="439" width="16" height="16"/><use href="#via" x="1252" y="420" width="16" height="16"/>
            <use href="#via" x="912" y="574" width="16" height="16"/><use href="#via" x="947" y="573" width="16" height="16"/><use href="#via" x="978" y="575" width="16" height="16"/><use href="#via" x="1008" y="575" width="16" height="16"/><use href="#via" x="879" y="625" width="16" height="16"/>
            <use href="#via" x="1214" y="577" width="16" height="16"/><use href="#via" x="1246" y="564" width="16" height="16"/><use href="#via" x="1237" y="590" width="16" height="16"/><use href="#via" x="1214" y="606" width="16" height="16"/><use href="#via" x="1300" y="673" width="16" height="16"/>
            <use href="#via" x="1118" y="744" width="16" height="16"/><use href="#via" x="956" y="783" width="16" height="16"/><use href="#via" x="1086" y="787" width="16" height="16"/><use href="#via" x="1183" y="799" width="16" height="16"/><use href="#via" x="1119" y="820" width="16" height="16"/><use href="#via" x="919" y="858" width="16" height="16"/>
            <use href="#via" x="1305" y="752" width="16" height="16"/><use href="#via" x="1300" y="806" width="16" height="16"/><use href="#via" x="1302" y="830" width="16" height="16"/>
          </g>
          <circle cx="1308" cy="814" r="4" fill="#005b78"/>
          <path d="M976 405.500h12M961.500 786v10M1088.500 790v10M1185 803.500h12M921 860h12M1256.500 423v10M980 588h12M1010 588h12" stroke="#7f7a00" stroke-width="2"/>
        </g>
      </svg>
      <ul class="context">
        <li><button>Done<kbd>F6</kbd></button></li>
        <li><button>Oops<kbd>F8</kbd></button></li>
        <li><button>Cancel<kbd>F9</kbd></button></li>
        <li><button>Next<kbd>Ctrl+F2</kbd></button></li>
        <li class="sep"><button>Reject</button></li>
        <li class="sep"><button>Delete Vertex</button></li>
        <li class="sep"><button>Move</button></li>
        <li><button>Copy</button></li>
        <li><button>Copy to Layers...</button></li>
        <li><button>Edit Boundary</button></li>
        <li class="sep"><button>Defer Dynamic Fill</button></li>
        <li><button>Change Shape Type</button></li>
        <li class="sep"><button class="hot">Assign Net</button></li>
        <li><button disabled>Assign Region</button></li>
        <li class="sep"><button>Raise Priority</button></li>
        <li><button>Lower Priority</button></li>
        <li class="sep"><button>Update Shape</button></li>
        <li class="sep"><button>Parameters...</button></li>
        <li class="sep"><button>Report...</button></li>
        <li><button>Snap pick to<svg class="sub" viewBox="0 0 4 8"><path d="M0 0l4 4-4 4z"/></svg></button></li>
      </ul>
      <svg class="arrow item-arrow" viewBox="0 0 80 40"><path d="M0 37.500L61 5l-2-4L79 1 67 16l-3-5L2 38z" fill="#fb3b39"/></svg>
    </div>

    <div class="console">
      <div class="tab">
        <svg viewBox="0 0 8 8"><path d="M1 1l6 6M7 1L1 7" stroke="#000" stroke-width="2"/></svg>
        <svg viewBox="0 0 8 8"><path d="M5 1v6L2 4z"/></svg>
        <svg viewBox="0 0 8 8"><g transform="rotate(90 4 4)"><use href="#pin" width="8" height="8"/></g></svg>
        <span>Comman</span>
        <i></i>
      </div>
      <div class="log"><p>last pick:&nbsp; 142.8 2125.4</p><p>Command &gt; d</p><p>Pick shape or void to edit.</p><p>last pick:&nbsp; 141.2 2096.1</p><p>Pick vertex or segment to edit.</p><p>Command &gt;</p></div>
    </div>
  </section>
</main>

<footer class="status"><span class="msg">shape select</span><span class="busy"></span><span class="blank"></span><span class="layer">Gnd</span></footer>
<div class="taskbar"><i class="one"></i><i class="two"></i><i class="three"></i></div>
</body>
</html>
```
FILE: styles.css
```css
* { box-sizing: border-box; }
body {
  margin: 0;
  min-height: 100vh;
  display: flex;
  flex-direction: column;
  overflow-x: hidden;
  background: #f0f0f0;
  color: #000;
  font: 11px/13px "Liberation Sans", Arial, sans-serif;
}
button, select, input { font: inherit; color: inherit; margin: 0; padding: 0; }
.defs { position: absolute; width: 0; height: 0; }

/* Menu bar */
.menubar {
  display: flex;
  gap: 15px;
  height: 23px;
  padding-left: 5px;
  border-bottom: 3px solid #cd0000;
  font: 12px/20px "Noto Sans", sans-serif;
  white-space: nowrap;
}
.menubar a { color: #3a3a3a; text-decoration: none; }
.menubar u { text-underline-offset: 2px; }

/* Tool bars */
.toolbar {
  display: flex;
  height: 33px;
  overflow: hidden;
  background: linear-gradient(#e8e8e8, #bcbcbc);
}
.toolbar.second { height: 34px; margin-top: 1px; }
.group {
  display: flex;
  align-items: center;
  flex: none;
  padding: 0 7px 0 3px;
  border-right: 1px dotted #fff;
}
.group::before {
  content: "";
  width: 3px;
  height: 23px;
  background: repeating-linear-gradient(#0078d7 0 3px, transparent 3px 5px);
}
.group button {
  width: 31px;
  height: 28px;
  display: grid;
  place-items: center;
  border: 0;
  background: none;
}
.group svg { width: 22px; height: 22px; filter: drop-shadow(0 0 1px #fff); }
.group .drop { width: 14px; }
.group .drop svg { width: 14px; }
.t3d { font: bold 19px "Liberation Sans", sans-serif; fill: #8db8e6; stroke: #3a6fae; stroke-width: 1px; }
.tiny { font: bold 7px "Liberation Sans", sans-serif; fill: #222; }
.mini { font: bold 6px "Liberation Sans", sans-serif; fill: #000; }
.small { font: bold 10px "Liberation Sans", sans-serif; fill: #555; }
.abc { font: 11px "Liberation Sans", sans-serif; fill: #666; }
.white { fill: #fff; }

/* Options panel */
main { flex: 1; display: flex; min-height: 0; }
.options {
  position: relative;
  flex: none;
  width: 238px;
  margin: 1px 7px 2px 2px;
  display: flex;
  flex-direction: column;
}
.caption {
  display: flex;
  align-items: center;
  gap: 7px;
  height: 17px;
  padding: 0 6px 0 2px;
  margin-bottom: 2px;
  background: linear-gradient(#ececec, #c0c0c0);
}
.caption span { flex: 1; padding-bottom: 2px; }
.caption button { width: 8px; height: 8px; border: 0; background: none; display: grid; }
.caption svg { width: 8px; height: 8px; }
.dots { width: 3px; height: 8px; background: linear-gradient(#0078d7 3px, transparent 3px 5px, #0078d7 5px); margin-right: -3px; }
.form {
  flex: 1;
  padding: 16px 17px 0 7px;
  border: 1px solid #696969;
  border-bottom: 0;
}
.title { display: block; line-height: 16px; margin-bottom: 3px; }
.combo { position: relative; display: grid; align-items: stretch; height: 21px; }
.combo select {
  appearance: none;
  width: 100%;
  padding: 0 18px 0 3px;
  border: 1px solid #7a7a7a;
  border-radius: 0;
  background: #fff;
  opacity: 1;
}
.combo svg {
  position: absolute;
  right: 4px;
  top: 8px;
  width: 10px;
  height: 6px;
  color: #444;
  pointer-events: none;
}
.flat select { background: #e1e1e1; border-color: #adadad; }
.off select { background: #ccc; border-color: #bfbfbf; color: #6d6d6d; }
.off svg { color: #999; }
.tall { height: 24px; }
.tall select { padding-left: 20px; padding-bottom: 2px; }
.tall svg { top: 10px; }
.swatch { position: absolute; left: 5px; top: 5px; width: 11px; height: 14px; background: #80b14c; border: 1px solid #000; }
.classes { display: grid; grid-template-columns: 13px 150px; column-gap: 7px; row-gap: 1px; padding-left: 8px; }
.swatchbtn {
  width: 13px;
  height: 13px;
  margin: 3px 0 0;
  border: 2px solid;
  border-color: #8a8a8a #fff #fff #8a8a8a;
  outline: 1px solid #999;
  outline-offset: -1px;
  background: #80b14c;
}
fieldset {
  min-width: 0;
  margin: 6px 0 0;
  padding: 2px 0 12px 6px;
  border: solid #dcdcdc;
  border-width: 1px 0 1px 1px;
}
legend { padding: 0 2px; line-height: 13px; }
.fillrow { display: grid; grid-template-columns: 34px 129px; align-items: center; padding-left: 8px; }
.check { display: flex; align-items: center; gap: 3px; margin-top: 4px; }
.check input { appearance: none; width: 13px; height: 13px; border: 1px solid #333; background: #fff; }
.net { display: block; margin: 7px 0 4px 7px; line-height: 14px; }
.netrow { display: grid; grid-template-columns: 152px 19px; column-gap: 3px; padding-left: 7px; margin-bottom: 1px; }
.more { height: 20px; margin-top: 1px; background: #e1e1e1; border: 1px solid #adadad; }
.gridrow { display: grid; grid-template-columns: 77px 103px; align-items: center; }
.segment { margin-top: 8px; padding-bottom: 7px; }
.segrow { display: grid; grid-template-columns: 70px 101px; align-items: center; margin-bottom: 1px; }
.segrow input {
  width: 100%;
  height: 21px;
  padding: 0 2px;
  border: 2px solid;
  border-color: #a0a0a0 #e3e3e3 #e3e3e3 #a0a0a0;
  border-radius: 0;
  background: #f0f0f0;
  color: #6d6d6d;
}
.dim label { color: #a0a0a0; text-shadow: 1px 1px #fff; }

/* Work area */
.work { flex: 1; min-width: 0; display: flex; flex-direction: column; padding: 3px 0 4px; }
.board {
  position: relative;
  flex: 1;
  display: flex;
  min-height: 560px;
  overflow: hidden;
  background: #000;
  border: solid #8a8a8a;
  border-width: 1px 0 0 1px;
}
.scene { flex: 1; width: 100%; min-height: 0; }
.gnd { font: 11px "Liberation Sans", sans-serif; fill: #1f8299; }
.context {
  position: absolute;
  left: 394px;
  top: 318px;
  width: 174px;
  margin: 0;
  padding: 2px;
  list-style: none;
  background: linear-gradient(90deg, #e8e8e8, #b9b9b9 21px, #fff 21px) content-box, #f0f0f0;
  border: 1px solid #a0a0a0;
  box-shadow: 3px 3px 4px rgba(0, 0, 0, .6);
  font: 13px/21px "Open Sans", "Noto Sans", sans-serif;
  color: #3a3a3a;
}
.context li { padding-left: 22px; }
.context .sep { padding-top: 6px; background: linear-gradient(#000, #000) 24px 2px / 142px 1px no-repeat; }
.context button {
  display: flex;
  align-items: center;
  justify-content: space-between;
  width: 100%;
  height: 21px;
  padding: 0 15px 0 5px;
  border: 0;
  background: none;
  white-space: nowrap;
}
.context kbd { font: inherit; }
.context .hot { background: #f7d9d9; }
.context button:disabled { background: #f0f0f0; color: #c6c6c6; }
.sub { width: 4px; height: 8px; margin-right: -7px; }
.arrow { position: absolute; pointer-events: none; }
.item-arrow { left: 334px; top: 616px; width: 80px; height: 40px; }
.status-arrow { left: 59px; bottom: 2px; width: 88px; height: 114px; }

/* Command console */
.console {
  display: flex;
  height: 90px;
  margin-top: 7px;
  border: solid #808080;
  border-width: 1px 0 1px 1px;
}
.tab {
  display: flex;
  flex-direction: column;
  align-items: center;
  gap: 4px;
  width: 16px;
  height: 87px;
  padding-top: 5px;
  background: linear-gradient(90deg, #f0f0f0, #bdbdbd);
}
.tab svg { flex: none; width: 8px; height: 8px; }
.tab span { flex: none; writing-mode: vertical-rl; transform: rotate(180deg); font-size: 9px; line-height: 12px; }
.tab i { flex: none; width: 8px; height: 3px; margin-top: -2px; background: linear-gradient(90deg, #0078d7 3px, transparent 3px 5px, #0078d7 5px); }
.log { flex: 1; height: 84px; padding: 2px 1px; background: #fff; border: solid #696969; border-width: 0 0 1px 1px; }
.log p { margin: 0; }

/* Status bar */
.status { display: flex; height: 18px; line-height: 16px; border-bottom: 1px solid #fff; }
.status span { border: solid #696969; border-width: 1px 0 0 1px; margin-left: 1px; }
.status .msg { flex: 1; padding-left: 2px; }
.status .busy { width: 53px; background: #0f0; }
.status .blank { width: 132px; }
.status .layer { width: 117px; padding-left: 4px; text-align: center; }
.taskbar { display: flex; height: 6px; padding-left: 299px; background: #1f2b1e; }
.one { width: 28px; background: #77751f; }
.two { width: 12px; background: #3b453b; }
.three { width: 48px; margin-left: 54px; background: #505a4f; }
```
